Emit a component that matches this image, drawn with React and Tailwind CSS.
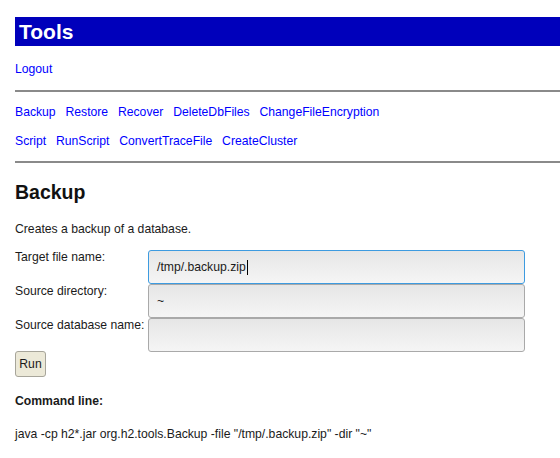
export default function App() {
  const links1 = ["Backup", "Restore", "Recover", "DeleteDbFiles", "ChangeFileEncryption"];
  const links2 = ["Script", "RunScript", "ConvertTraceFile", "CreateCluster"];
  const font = { fontFamily: '"Liberation Sans", Arial, Helvetica, sans-serif' };
  return (
    <div className="w-[560px] h-[458px] overflow-hidden bg-white pl-[15px] text-[12.2px] text-black" style={font}>
      <div className="w-[560px]">
        <div className="mt-[17px] h-[29px] bg-[#0000bb] pl-[4px] text-[21px] leading-[29px] font-bold text-white">
          Tools
        </div>
        <div className="mt-[14px] leading-[18px]">
          <a href="#" className="text-[#0000ff]">Logout</a>
        </div>
        <div className="mt-[12px] h-[2px] bg-[#8a8a8a]" />
        <div className="mt-[11px] flex gap-x-[9.8px] leading-[18px]">
          {links1.map((l) => (
            <a key={l} href="#" className="text-[#0000ff]">{l}</a>
          ))}
        </div>
        <div className="mt-[11px] flex gap-x-[9.8px] leading-[18px]">
          {links2.map((l) => (
            <a key={l} href="#" className="text-[#0000ff]">{l}</a>
          ))}
        </div>
        <div className="mt-[11px] h-[2px] bg-[#8a8a8a]" />
        <div className="mt-[17px] text-[19.5px] font-bold leading-[24px] text-[#111]">Backup</div>
        <div className="mt-[16px] leading-[18px] text-[#1a1a1a]">Creates a backup of a database.</div>
        <div className="mt-[12px] grid grid-cols-[133px_377px] text-[#1a1a1a]">
          <div className="leading-[14px]">Target file name:</div>
          <div className="flex h-[34px] items-center rounded-[3px] border border-[#3d9be0] bg-gradient-to-b from-[#e6e6e6] to-[#f5f5f5] pl-[8px] pt-[1px]">
            <span>/tmp/.backup.zip</span>
            <span className="ml-[1px] inline-block h-[15px] w-[1px] bg-black" />
          </div>
          <div className="leading-[14px]">Source directory:</div>
          <div className="flex h-[34px] items-center rounded-[3px] border border-[#a9a9a9] bg-gradient-to-b from-[#e6e6e6] to-[#f5f5f5] pl-[8px] pt-[1px]">
            <span>~</span>
          </div>
          <div className="leading-[14px] whitespace-nowrap">Source database name:</div>
          <div className="flex h-[34px] items-center rounded-[3px] border border-[#a9a9a9] bg-gradient-to-b from-[#e6e6e6] to-[#f5f5f5] pl-[8px]" />
        </div>
        <button className="mt-[-1px] flex h-[26px] w-[31px] items-center justify-center rounded-[3px] border border-[#a7a59a] bg-[#ece9d8] text-[12.2px] text-[#1a1a1a]" style={font}>
          Run
        </button>
        <div className="mt-[15px] font-bold leading-[18px] text-[#1a1a1a]">Command line:</div>
        <div className="mt-[15px] leading-[18px] text-[#1a1a1a]">
          java -cp h2*.jar org.h2.tools.Backup -file "/tmp/.backup.zip" -dir "~"
        </div>
      </div>
    </div>
  );
}
